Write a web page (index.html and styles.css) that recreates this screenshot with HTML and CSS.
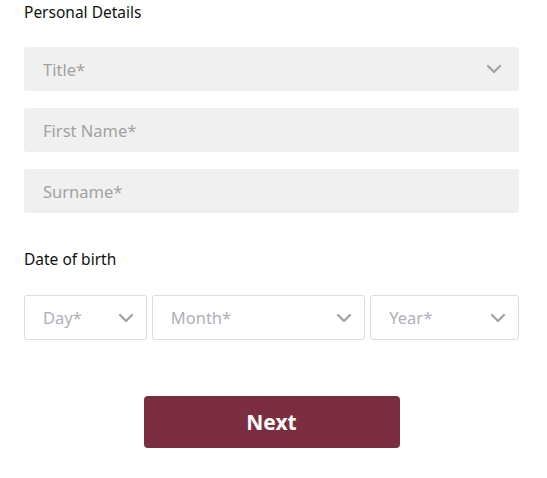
FILE: index.html
```html
<!DOCTYPE html>
<html>
<head>
<meta charset="utf-8">
<link rel="stylesheet" href="styles.css">
</head>
<body>
<div class="form">
  <h2 class="heading">Personal Details</h2>
  <div class="field select-field">
    <span class="ph">Title*</span>
    <svg class="chev" viewBox="0 0 16 10" width="16" height="10"><path d="M2 2 L8 8 L14 2" fill="none" stroke="#a3a3aa" stroke-width="2.4" stroke-linecap="round" stroke-linejoin="round"/></svg>
  </div>
  <div class="field"><span class="ph">First Name*</span></div>
  <div class="field"><span class="ph">Surname*</span></div>

  <h2 class="heading dob">Date of birth</h2>
  <div class="dob-row">
    <div class="box day"><span class="ph2">Day*</span><svg class="chev" viewBox="0 0 16 10" width="16" height="10"><path d="M2 2 L8 8 L14 2" fill="none" stroke="#a3a3aa" stroke-width="2.4" stroke-linecap="round" stroke-linejoin="round"/></svg></div>
    <div class="box month"><span class="ph2">Month*</span><svg class="chev" viewBox="0 0 16 10" width="16" height="10"><path d="M2 2 L8 8 L14 2" fill="none" stroke="#a3a3aa" stroke-width="2.4" stroke-linecap="round" stroke-linejoin="round"/></svg></div>
    <div class="box year"><span class="ph2">Year*</span><svg class="chev" viewBox="0 0 16 10" width="16" height="10"><path d="M2 2 L8 8 L14 2" fill="none" stroke="#a3a3aa" stroke-width="2.4" stroke-linecap="round" stroke-linejoin="round"/></svg></div>
  </div>
  <div class="actions"><button class="next">Next</button></div>
</div>
</body>
</html>
```
FILE: styles.css
```css
html, body { margin: 0; padding: 0; background: #fff; }
body { font-family: "Noto Sans", "Open Sans", sans-serif; }
.form { width: 495px; padding: 2px 0 0 24px; }
.heading { margin: 0 0 25px; font-size: 15.5px; line-height: 20px; font-weight: 400; color: #111; }
.field { box-sizing: border-box; height: 44px; background: #f0f0f0; border-radius: 3px; padding: 0 19px; display: flex; align-items: center; justify-content: space-between; margin-bottom: 17px; }
.ph { font-size: 16.5px; color: #a2a2a2; }
.chev { display: block; margin-right: -2px; }
.heading.dob { margin-top: 36px; margin-bottom: 26px; }
.dob-row { display: flex; gap: 5px; }
.box { box-sizing: border-box; height: 45px; border: 1px solid #dcdce0; border-radius: 3px; padding: 0 14px 0 18px; display: flex; align-items: center; justify-content: space-between; }
.day { width: 123px; }
.month { width: 214px; }
.year { width: 149px; }
.ph2 { font-size: 16.5px; color: #b0b0b8; }
.actions { display: flex; justify-content: center; padding-top: 56px; }
.next { width: 256px; height: 52px; background: #7a2e3f; color: #fff; border: none; border-radius: 4px; font-family: "Noto Sans", "Open Sans", sans-serif; font-size: 21px; font-weight: 700; cursor: pointer; }
```
